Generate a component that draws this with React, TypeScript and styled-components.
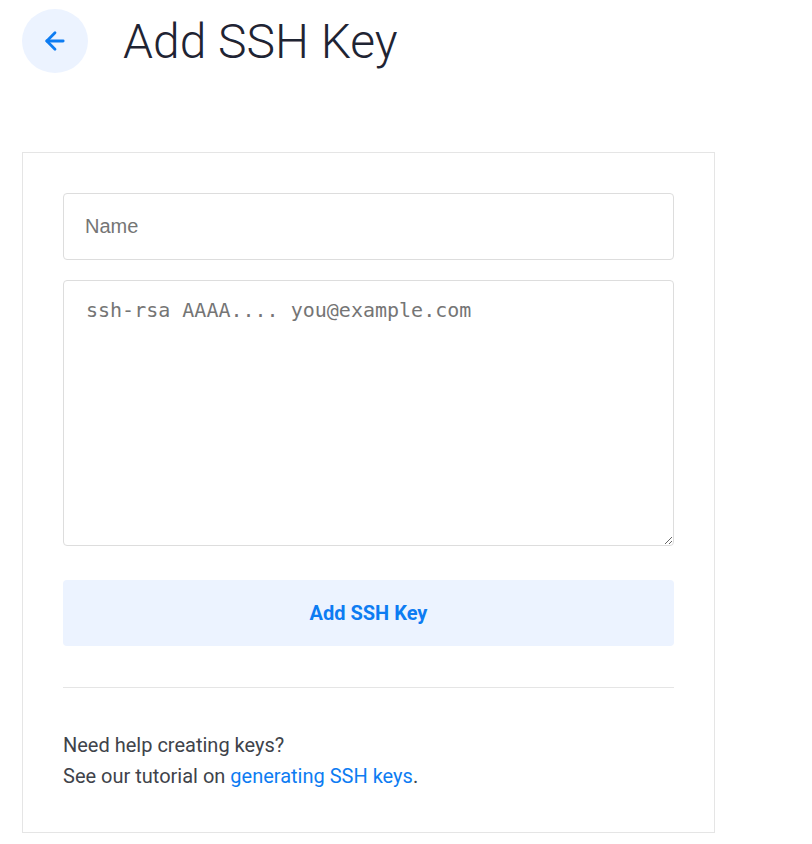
import React from "react";
import styled, { createGlobalStyle } from "styled-components";

const GlobalStyle = createGlobalStyle`
  html, body { margin: 0; padding: 0; background: #ffffff; }
  body { font-family: Roboto, "Liberation Sans", sans-serif; }
  * { box-sizing: border-box; }
`;

const Page = styled.div`
  padding: 9px 0 0 22px;
  width: 812px;
  min-height: 844px;
  border-left: 8px solid #fdfdfb;
  margin-left: -8px;
`;

const Header = styled.header`
  display: flex;
  align-items: center;
  gap: 35px;
  height: 64px;
`;

const BackButton = styled.button`
  width: 66px;
  height: 64px;
  border-radius: 50%;
  border: none;
  background: #ecf3ff;
  display: flex;
  align-items: center;
  justify-content: center;
  padding: 0;
  cursor: pointer;
`;

const Title = styled.h1`
  margin: 0;
  font-family: Roboto, sans-serif;
  font-weight: 300;
  font-size: 48px;
  color: #1f2433;
  letter-spacing: 0;
`;

const Panel = styled.section`
  margin-top: 79px;
  width: 693px;
  border: 1px solid #e5e5e5;
  padding: 40px 40px 40px 40px;
  display: flex;
  flex-direction: column;
`;

const NameInput = styled.input`
  width: 611px;
  height: 67px;
  border: 1px solid #dddddd;
  border-radius: 4px;
  padding: 0 21px;
  font-family: "Liberation Sans", Arial, sans-serif;
  font-size: 20px;
  color: #333;
  outline: none;
  &::placeholder { color: #757575; }
`;

const KeyArea = styled.textarea`
  margin-top: 20px;
  width: 611px;
  height: 266px;
  border: 1px solid #dddddd;
  border-radius: 4px;
  padding: 15px 22px;
  font-family: "DejaVu Sans Mono", monospace;
  font-size: 20px;
  line-height: 28px;
  color: #333;
  outline: none;
  resize: vertical;
  &::placeholder { color: #757575; }
`;

const SubmitButton = styled.button`
  margin-top: 34px;
  width: 611px;
  height: 66px;
  border: none;
  border-radius: 4px;
  background: #ecf3ff;
  color: #0d7cf2;
  font-family: Roboto, sans-serif;
  font-weight: 700;
  font-size: 20px;
  cursor: pointer;
`;

const Divider = styled.hr`
  margin: 41px 0 0 0;
  width: 611px;
  border: none;
  border-top: 1px solid #e5e5e5;
`;

const Help = styled.div`
  margin-top: 42px;
  font-family: Roboto, sans-serif;
  font-size: 20px;
  line-height: 31px;
  color: #40434a;
`;

const HelpLine = styled.p`
  margin: 0;
`;

const Link = styled.a`
  color: #0d7cf2;
  text-decoration: none;
`;

export default function App() {
  return (
    <>
      <GlobalStyle />
      <Page>
        <Header>
          <BackButton aria-label="Back">
            <svg width="28" height="28" viewBox="0 0 24 24" fill="none" stroke="#0d7cf2" strokeWidth="2.4" strokeLinecap="round" strokeLinejoin="round">
              <path d="M19 12H5" />
              <path d="M12 19l-7-7 7-7" />
            </svg>
          </BackButton>
          <Title>Add SSH Key</Title>
        </Header>
        <Panel>
          <NameInput placeholder="Name" />
          <KeyArea placeholder="ssh-rsa AAAA.... you@example.com" />
          <SubmitButton>Add SSH Key</SubmitButton>
          <Divider />
          <Help>
            <HelpLine>Need help creating keys?</HelpLine>
            <HelpLine>
              See our tutorial on <Link href="#">generating SSH keys</Link>.
            </HelpLine>
          </Help>
        </Panel>
      </Page>
    </>
  );
}
